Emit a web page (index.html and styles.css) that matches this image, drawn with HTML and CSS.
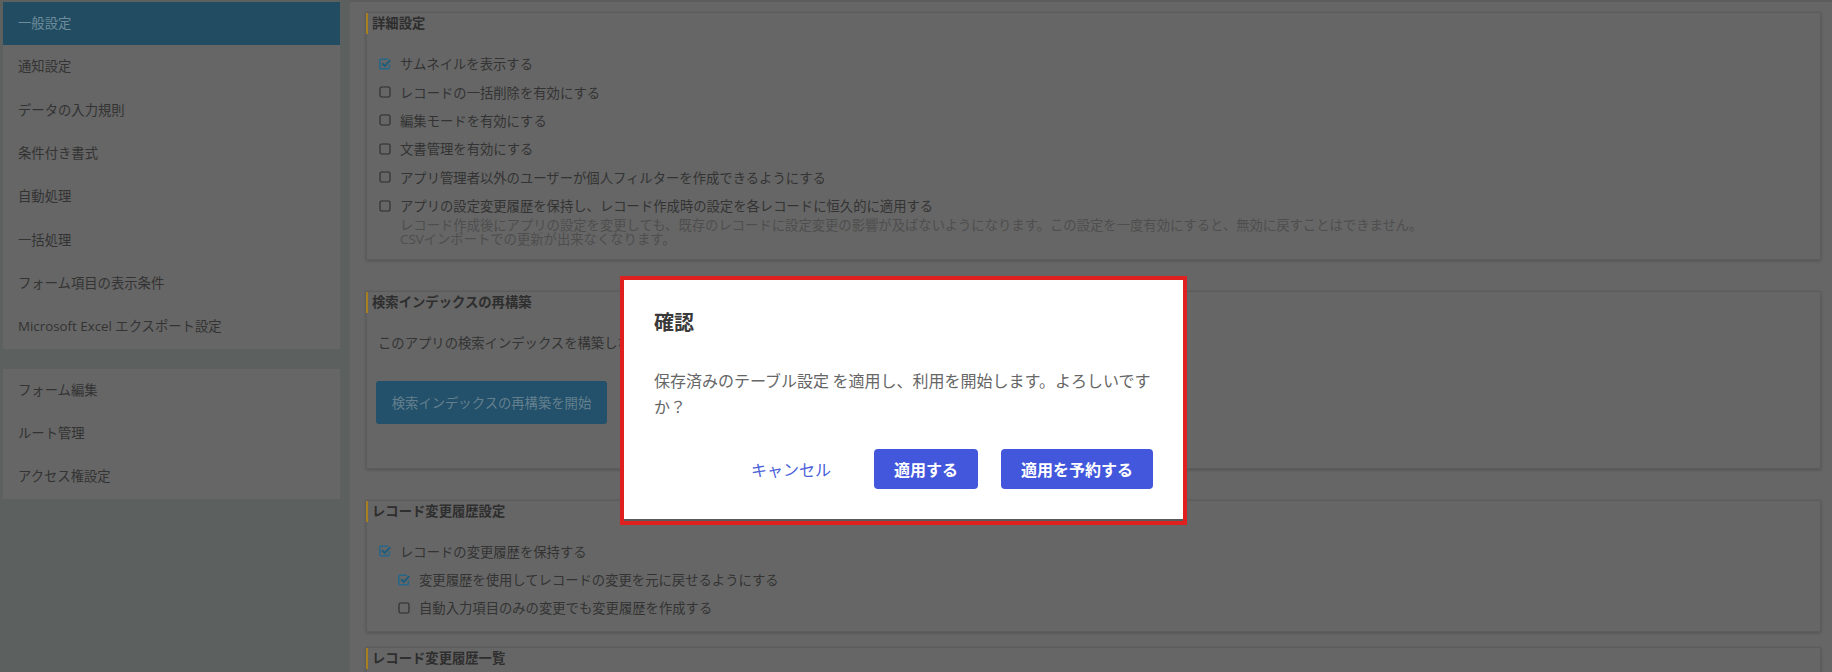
FILE: index.html
```html
<!DOCTYPE html>
<html lang="ja">
<head>
<meta charset="utf-8">
<title>一般設定</title>
<link rel="stylesheet" href="styles.css">
</head>
<body>
<div class="app">
  <aside class="side">
    <nav class="side-card">
      <a class="side-item is-active">一般設定</a>
      <a class="side-item">通知設定</a>
      <a class="side-item">データの入力規則</a>
      <a class="side-item">条件付き書式</a>
      <a class="side-item">自動処理</a>
      <a class="side-item">一括処理</a>
      <a class="side-item">フォーム項目の表示条件</a>
      <a class="side-item">Microsoft Excel エクスポート設定</a>
    </nav>
    <nav class="side-card">
      <a class="side-item">フォーム編集</a>
      <a class="side-item">ルート管理</a>
      <a class="side-item">アクセス権設定</a>
    </nav>
  </aside>
  <main class="main">
    <section class="panel panel-detail">
      <h2 class="panel-title">詳細設定</h2>
      <div class="rows">
        <label class="row"><svg class="cb" viewBox="0 0 12 12"><use href="#on"/></svg>サムネイルを表示する</label>
        <label class="row"><svg class="cb" viewBox="0 0 12 12"><use href="#off"/></svg>レコードの一括削除を有効にする</label>
        <label class="row"><svg class="cb" viewBox="0 0 12 12"><use href="#off"/></svg>編集モードを有効にする</label>
        <label class="row"><svg class="cb" viewBox="0 0 12 12"><use href="#off"/></svg>文書管理を有効にする</label>
        <label class="row"><svg class="cb" viewBox="0 0 12 12"><use href="#off"/></svg>アプリ管理者以外のユーザーが個人フィルターを作成できるようにする</label>
        <label class="row"><svg class="cb" viewBox="0 0 12 12"><use href="#off"/></svg>アプリの設定変更履歴を保持し、レコード作成時の設定を各レコードに恒久的に適用する</label>
      </div>
      <p class="help">レコード作成後にアプリの設定を変更しても、既存のレコードに設定変更の影響が及ばないようになります。この設定を一度有効にすると、無効に戻すことはできません。<br>CSVインポートでの更新が出来なくなります。</p>
    </section>
    <section class="panel panel-index">
      <h2 class="panel-title">検索インデックスの再構築</h2>
      <p class="panel-text">このアプリの検索インデックスを構築しなおします。</p>
      <button class="index-btn">検索インデックスの再構築を開始</button>
    </section>
    <section class="panel panel-history">
      <h2 class="panel-title">レコード変更履歴設定</h2>
      <div class="rows">
        <label class="row"><svg class="cb" viewBox="0 0 12 12"><use href="#on"/></svg>レコードの変更履歴を保持する</label>
        <label class="row row-sub"><svg class="cb" viewBox="0 0 12 12"><use href="#on"/></svg>変更履歴を使用してレコードの変更を元に戻せるようにする</label>
        <label class="row row-sub"><svg class="cb" viewBox="0 0 12 12"><use href="#off"/></svg>自動入力項目のみの変更でも変更履歴を作成する</label>
      </div>
    </section>
    <section class="panel panel-list">
      <h2 class="panel-title">レコード変更履歴一覧</h2>
    </section>
  </main>
</div>

<svg class="defs" width="0" height="0" aria-hidden="true">
  <symbol id="off" viewBox="0 0 12 12"><rect x="1" y="1" width="10" height="10" rx="1.6" fill="none" stroke="#2c2c2c" stroke-width="1.1"/></symbol>
  <symbol id="on" viewBox="0 0 12 12"><path d="M10.4 6.500v3a1.300 1.300 0 0 1-1.300 1.300H2.100A1.300 1.300 0 0 1 .8 9.500V2.500A1.300 1.300 0 0 1 2.100 1.200h6.900" fill="none" stroke="#24678a" stroke-width="1.500"/><path d="M3 5.300 5.700 8 11.300 2.100" fill="none" stroke="#1f5d7d" stroke-width="2"/></symbol>
</svg>

<div class="layer">
  <div class="dialog-frame">
    <div class="dialog" role="dialog">
      <h1 class="dialog-title">確認</h1>
      <p class="dialog-body">保存済みのテーブル設定 を適用し、利用を開始します。よろしいですか？</p>
      <div class="dialog-actions">
        <button class="btn-text">キャンセル</button>
        <button class="btn-primary btn-apply">適用する</button>
        <button class="btn-primary btn-schedule">適用を予約する</button>
      </div>
    </div>
  </div>
</div>
</body>
</html>
```

FILE: styles.css
```css
* { box-sizing: border-box; }
html, body { margin: 0; height: 100%; overflow: hidden; }
body {
  background: #666;
  color: #303030;
  font-family: "Open Sans", "Noto Sans CJK JP", sans-serif;
  font-size: 13.33px;
}
.defs { position: absolute; }
.app { display: flex; height: 672px; overflow: hidden; }

.side {
  flex: 0 0 350px;
  background: #5c605f;
  padding: 2px 10px 0 3px;
  display: flex;
  flex-direction: column;
  gap: 20px;
}
.side-card { background: #666; display: flex; flex-direction: column; }
.side-item {
  height: 43.33px;
  padding: 0 0 2px 15px;
  display: flex;
  align-items: center;
  color: #333;
}
.is-active { background: #214c62; color: #6f8c9b; }

.main {
  flex: 1;
  padding: 10px 11px 0 16px;
  border-top: 2px solid #5c5c5c;
  display: flex;
  flex-direction: column;
}
.panel {
  border: 1px solid #5c5c5c;
  box-shadow: 0 1px 3px rgba(0, 0, 0, .2);
  flex: none;
}
.panel-title {
  margin: 0 0 0 -1px;
  height: 21px;
  line-height: 20px;
  border-left: 2px solid #a87e1f;
  padding-left: 4px;
  font-size: 13.33px;
  font-weight: 700;
  color: #2e2e2e;
}
.rows { display: flex; flex-direction: column; padding-left: 12px; }
.row {
  height: 28.4px;
  display: flex;
  align-items: center;
  gap: 9px;
  color: #333;
}
.row-sub { padding-left: 19px; }
.cb { width: 12px; height: 12px; flex: none; }

.panel-detail { height: 248px; margin-bottom: 31px; }
.panel-detail .rows { margin-top: 15.5px; }
.help {
  margin: -2px 0 0 33px;
  line-height: 14px;
  color: #4e4e4e;
}

.panel-index { height: 178px; margin-bottom: 31px; }
.panel-text { margin: 20px 0 0 11px; line-height: 20px; color: #333; }
.index-btn {
  display: block;
  margin: 28px 0 0 9px;
  width: 231px;
  height: 43px;
  background: #23506a;
  border: 0;
  border-radius: 3px;
  color: #64808f;
  font: inherit;
  text-align: center;
}

.panel-history { height: 132px; margin-bottom: 15px; }
.panel-history .rows { margin-top: 15px; }
.panel-list { height: 60px; }

.layer {
  position: fixed;
  inset: 0;
  display: flex;
  justify-content: center;
  align-items: flex-start;
  padding: 276px 25px 0 0;
  font-family: "Noto Sans CJK JP", sans-serif;
}
.dialog-frame {
  width: 567px;
  height: 249px;
  border: 4px solid #e01f1f;
  background: #5a5a5a;
  padding-bottom: 2px;
}
.dialog {
  height: 100%;
  background: #fff;
  padding: 0 30px;
  display: flex;
  flex-direction: column;
}
.dialog-title {
  margin: 27px 0 0;
  font-size: 20px;
  line-height: 30px;
  font-weight: 700;
  color: #3a3a3a;
}
.dialog-body {
  margin: 30px 0 0;
  font-size: 16px;
  line-height: 26px;
  color: #666;
}
.dialog-actions {
  margin-top: auto;
  margin-bottom: 30px;
  display: flex;
  justify-content: flex-end;
  align-items: center;
  gap: 23px;
}
.btn-text {
  background: none;
  border: 0;
  padding: 0 20px 0 0;
  font: inherit;
  font-size: 16px;
  color: #4a5fd8;
}
.btn-primary {
  height: 40px;
  background: #4257dc;
  border: 0;
  border-radius: 4px;
  color: #fff;
  font: inherit;
  font-size: 16px;
  font-weight: 700;
}
.btn-apply { width: 104px; }
.btn-schedule { width: 152px; }
```
